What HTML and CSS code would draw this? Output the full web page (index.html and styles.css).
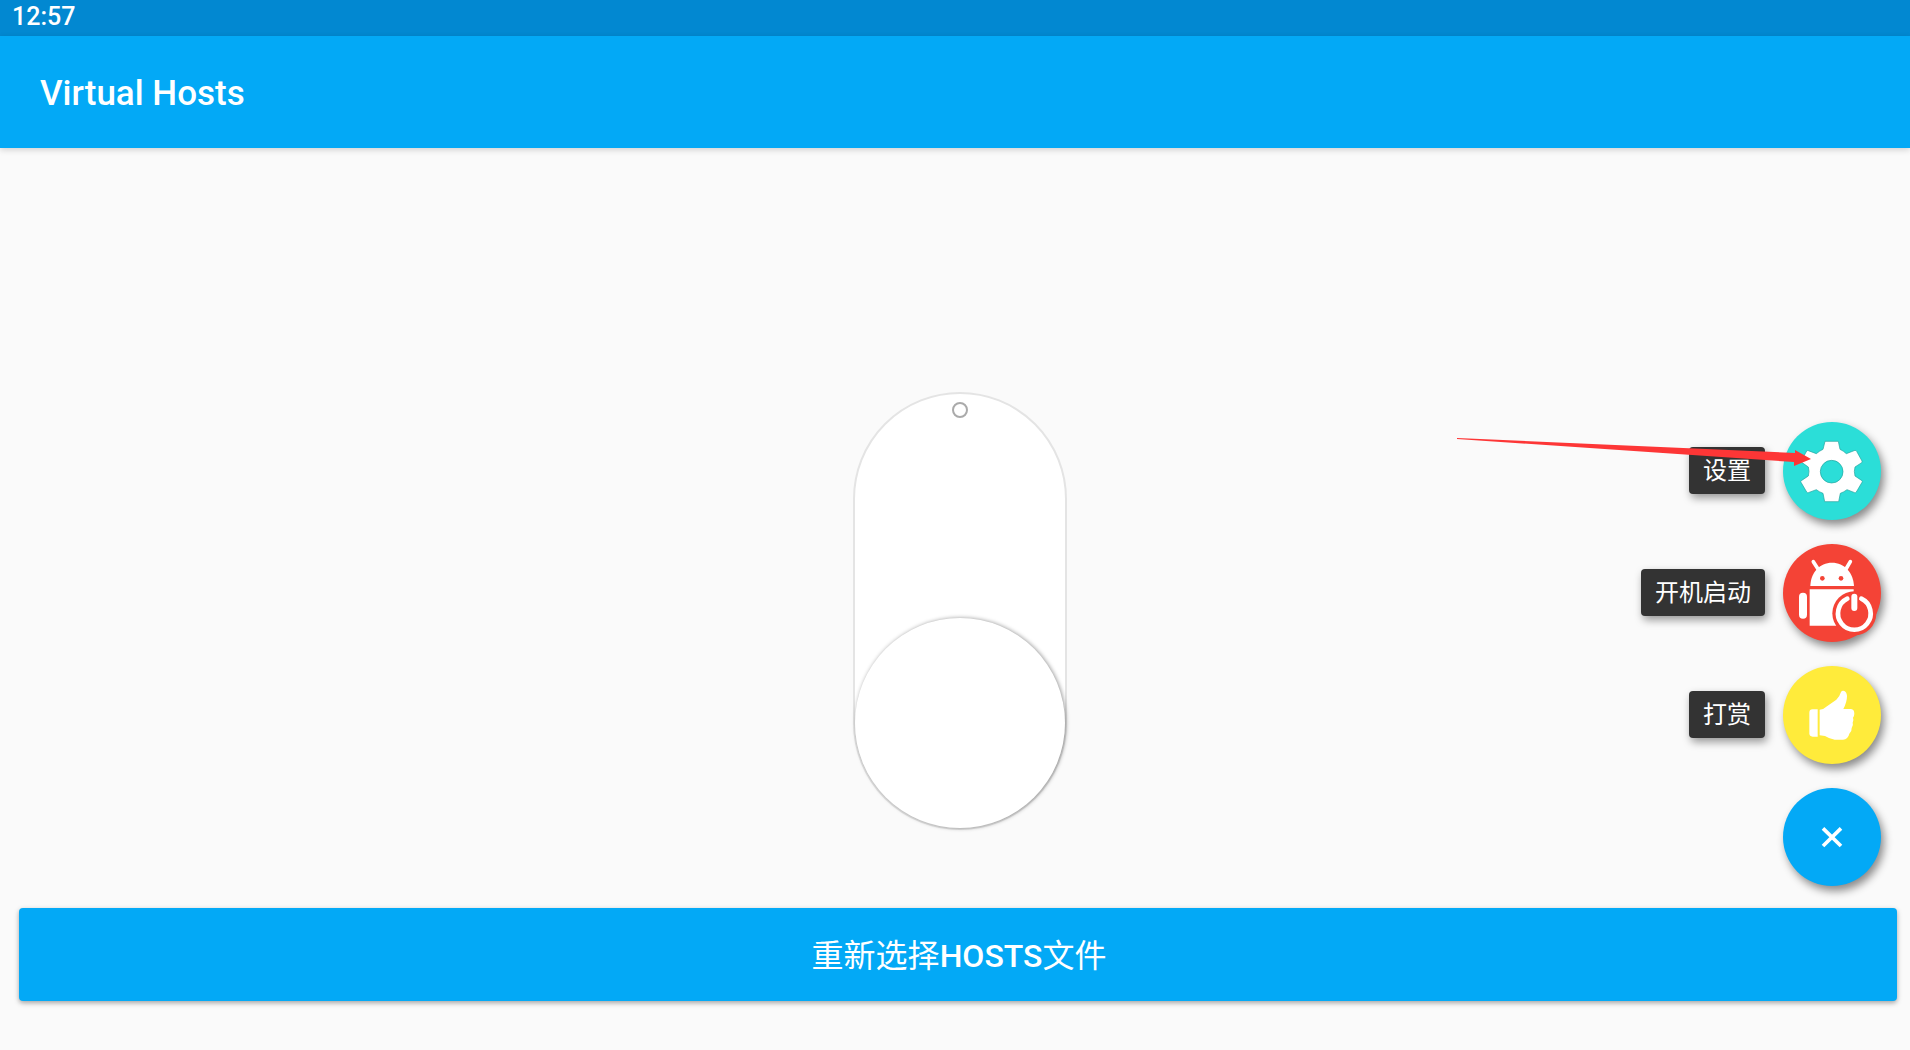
FILE: index.html
```html
<!DOCTYPE html>
<html lang="zh-CN">
<head>
  <meta charset="UTF-8">
  <meta name="viewport" content="width=device-width, initial-scale=1.0">
  <title>Virtual Hosts</title>
  <link rel="stylesheet" href="styles.css">
</head>
<body>
  <div class="status-bar">12:57</div>

  <header>
    <h1>Virtual Hosts</h1>
  </header>

  <main>
    <!-- VPN switch -->
    <div class="switch-area">
      <label class="vpn-switch">
        <input type="checkbox" role="switch" aria-label="Virtual Hosts">
        <span class="indicator"></span>
        <span class="knob"></span>
      </label>
    </div>

    <button type="button" class="select-button"><span class="cjk">重新选择</span>HOSTS<span class="cjk">文件</span></button>
  </main>

  <!-- Floating menu -->
  <div class="fab-menu">
    <div class="fab-row">
      <label class="fab-label" for="settings">设置</label>
      <button type="button" class="fab settings" id="settings">
        <svg viewBox="0 0 294 294" aria-hidden="true">
          <path fill="#fff" fill-rule="evenodd" stroke="#1fa19c" stroke-width="2" stroke-linejoin="round" d="M126 58H166L171 82Q182 87 190 95L216 85Q219 85 221 88L237 117Q238 120 236 122L216 135Q212 148 216 162L237 176Q239 178 237 181L220 210Q218 213 215 212L192 203Q183 210 172 214L167 239H125L120 214Q109 210 100 203L76 212Q73 213 71 210L54 181Q52 178 55 176L76 162Q80 148 76 135L56 121Q53 119 55 116L71 87Q73 85 76 86L100 95Q109 87 120 82ZM146 115a34 34 0 1 0 0 68a34 34 0 1 0 0-68z"/>
        </svg>
      </button>
      <svg class="arrow" viewBox="0 0 354 28" aria-hidden="true">
        <path fill="#fd3636" d="M0 0L338 15V12L354 21L337 28V24L0 1z"/>
      </svg>
    </div>

    <div class="fab-row">
      <label class="fab-label" for="boot">开机启动</label>
      <button type="button" class="fab boot" id="boot">
        <svg viewBox="0 0 294 294" aria-hidden="true">
          <path fill="#fff" d="M82 126C83 86 110 56 147 56S211 86 213 126z"/>
          <path stroke="#fff" stroke-width="11" stroke-linecap="round" d="M91 53L105 75M202 53L189 75"/>
          <circle cx="118" cy="103" r="7" fill="#f44336"/>
          <circle cx="174" cy="103" r="7" fill="#f44336"/>
          <path fill="#fff" d="M80 136H212V245H80z"/>
          <rect x="48" y="146" width="24" height="78" rx="12" fill="#fff"/>
          <circle cx="214" cy="208" r="66" fill="#f44336"/>
          <path fill="none" stroke="#fff" stroke-width="14" stroke-linecap="round" d="M193 164A49 49 0 1 0 235 164"/>
          <path stroke="#fff" stroke-width="18" stroke-linecap="round" d="M214 158V192"/>
        </svg>
      </button>
    </div>

    <div class="fab-row">
      <label class="fab-label" for="donate">打赏</label>
      <button type="button" class="fab donate" id="donate">
        <svg viewBox="0 0 294 294" aria-hidden="true">
          <path fill="#fff" d="M89 130H104V212H89Q79 212 79 202V140Q79 130 89 130z"/>
          <path fill="#fff" d="M110 131Q122 131 132 121L160 101Q170 92 174 78Q177 73 184 75Q191 78 192 90Q192 108 181 129H204Q214 130 214 143Q214 150 210 155Q213 162 209 170Q212 178 206 186Q207 196 199 203Q195 220 180 221H155Q140 219 126 210L110 208z"/>
        </svg>
      </button>
    </div>

    <div class="fab-row">
      <button type="button" class="fab close" aria-label="关闭">
        <svg viewBox="0 0 294 294" aria-hidden="true">
          <path stroke="#fff" stroke-width="11" d="M120 121L174 174M174 121L120 174"/>
        </svg>
      </button>
    </div>
  </div>
</body>
</html>
```
FILE: styles.css
```css
/* General Styles */
* {
  box-sizing: border-box;
}

body {
  display: flex;
  flex-direction: column;
  min-height: 100vh;
  margin: 0;
  font-family: Roboto, "Noto Sans CJK SC", sans-serif;
  background-color: #fafafa;
  color: #fff;
}

button {
  border: none;
  color: inherit;
  font-family: inherit;
  cursor: pointer;
}

.status-bar {
  height: 36px;
  padding-left: 12px;
  background-color: #0288d1;
  font-size: 25px;
  font-weight: 500;
  line-height: 34px;
}

header {
  display: flex;
  align-items: center;
  height: 112px;
  padding: 2px 40px 0;
  background-color: #03a9f6;
  box-shadow: 0 2px 6px rgba(0, 0, 0, 0.16);
}

header h1 {
  margin: 0;
  font-size: 35px;
  font-weight: 500;
}

main {
  flex: 1;
  display: flex;
  flex-direction: column;
  padding: 0 13px 49px 19px;
}

/* Switch */
.switch-area {
  flex: 1;
  display: flex;
  justify-content: center;
  align-items: flex-end;
  padding: 40px 0 78px 4px;
}

.vpn-switch {
  display: flex;
  flex-direction: column;
  justify-content: space-between;
  align-items: center;
  width: 214px;
  height: 438px;
  border: 2px solid #e4e4e4;
  border-radius: 107px;
  background-color: #fff;
  cursor: pointer;
}

.vpn-switch input {
  position: absolute;
  opacity: 0;
}

.indicator {
  width: 16px;
  height: 16px;
  margin-top: 8px;
  border: 2px solid #aaa;
  border-radius: 50%;
}

.knob {
  width: 210px;
  height: 210px;
  border-radius: 50%;
  background-color: #fff;
  box-shadow: 1px 0 4px rgba(0, 0, 0, 0.4);
}

.select-button {
  height: 93px;
  padding: 0 0 4px 2px;
  border-radius: 4px;
  background-color: #03a9f6;
  box-shadow: 0 2px 5px rgba(0, 0, 0, 0.35);
  font-size: 32px;
  font-weight: 500;
}

.select-button .cjk {
  font-weight: 400;
}

/* Floating menu */
.fab-menu {
  position: absolute;
  right: 29px;
  bottom: 164px;
  display: flex;
  flex-direction: column;
  gap: 24px;
}

.fab-row {
  position: relative;
  display: flex;
  justify-content: flex-end;
  align-items: center;
  gap: 18px;
}

.fab-label {
  height: 47px;
  margin-bottom: 2px;
  padding: 0 14px;
  border-radius: 4px;
  background-color: #333;
  box-shadow: 2px 4px 8px rgba(0, 0, 0, 0.4);
  font-size: 24px;
  line-height: 48px;
}

.fab {
  width: 98px;
  height: 98px;
  padding: 0;
  border-radius: 50%;
  box-shadow: 3px 5px 9px rgba(0, 0, 0, 0.45);
}

.fab svg {
  display: block;
  width: 100%;
}

.settings {
  background-color: #2bded8;
}

.boot {
  background-color: #f44336;
}

.donate {
  background-color: #ffeb3b;
}

.close {
  background-color: #03a9f6;
}

/* Arrow pointing at the settings button */
.arrow {
  position: absolute;
  top: 16px;
  right: 70px;
  width: 354px;
  pointer-events: none;
}
```
